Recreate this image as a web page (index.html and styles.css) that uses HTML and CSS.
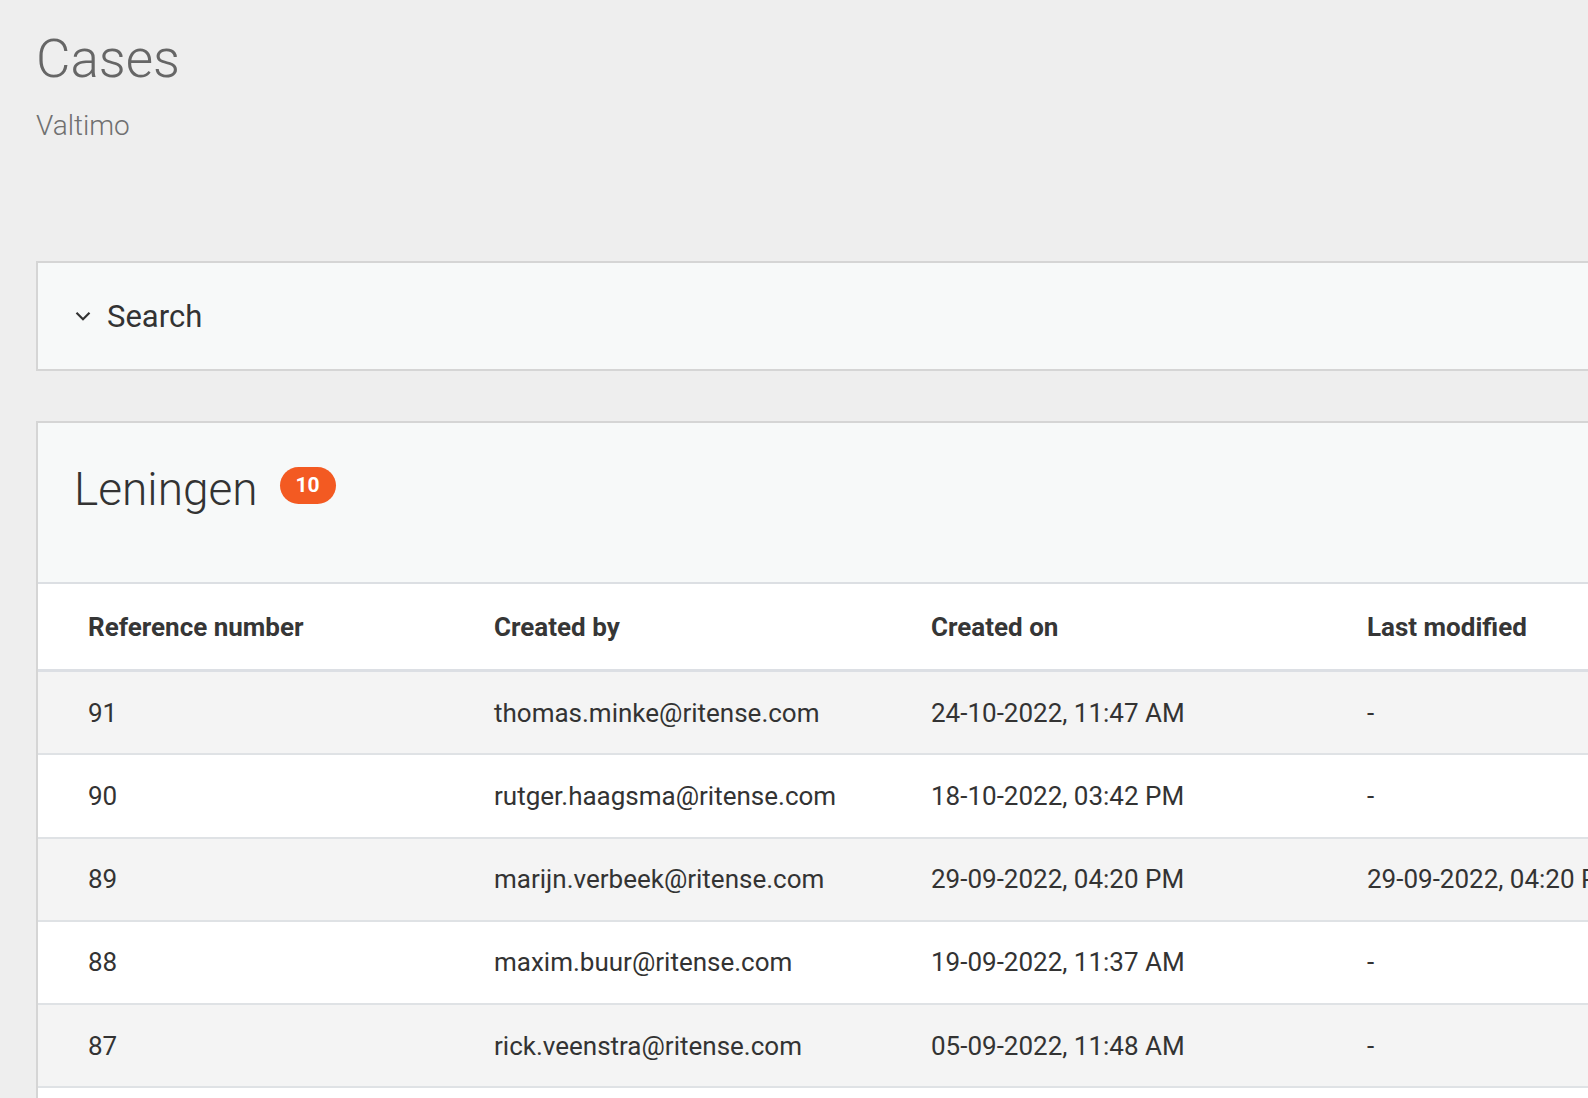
FILE: index.html
```html
<!DOCTYPE html>
<html lang="en">
<head>
<meta charset="utf-8">
<title>Cases - Valtimo</title>
<link rel="stylesheet" href="styles.css">
</head>
<body>
<div class="page">
  <header class="page-header">
    <h1 class="page-title">Cases</h1>
    <div class="page-subtitle">Valtimo</div>
  </header>

  <section class="search-panel">
    <svg class="chevron" width="16" height="10" viewBox="0 0 16 10" aria-hidden="true">
      <polyline points="1.5,1.8 8,8.2 14.5,1.8" fill="none" stroke="#333" stroke-width="2.2" stroke-linecap="butt" stroke-linejoin="miter"/>
    </svg>
    <span class="search-label">Search</span>
  </section>

  <section class="list-card">
    <div class="list-card-header">
      <h2 class="list-title">Leningen</h2>
      <span class="count-badge">10</span>
    </div>
    <table class="cases-table">
      <colgroup>
        <col class="col-ref">
        <col class="col-by">
        <col class="col-on">
        <col class="col-mod">
      </colgroup>
      <thead>
        <tr>
          <th>Reference number</th>
          <th>Created by</th>
          <th>Created on</th>
          <th>Last modified</th>
        </tr>
      </thead>
      <tbody>
        <tr><td>91</td><td>thomas.minke@ritense.com</td><td>24-10-2022, 11:47 AM</td><td>-</td></tr>
        <tr><td>90</td><td>rutger.haagsma@ritense.com</td><td>18-10-2022, 03:42 PM</td><td>-</td></tr>
        <tr><td>89</td><td>marijn.verbeek@ritense.com</td><td>29-09-2022, 04:20 PM</td><td>29-09-2022, 04:20 PM</td></tr>
        <tr><td>88</td><td>maxim.buur@ritense.com</td><td>19-09-2022, 11:37 AM</td><td>-</td></tr>
        <tr><td>87</td><td>rick.veenstra@ritense.com</td><td>05-09-2022, 11:48 AM</td><td>-</td></tr>
        <tr class="row-empty"><td></td><td></td><td></td><td></td></tr>
      </tbody>
    </table>
  </section>
</div>
</body>
</html>
```

FILE: styles.css
```css
html, body {
  margin: 0;
  padding: 0;
  overflow: hidden;
}

body {
  background: #eeeeee;
  font-family: Roboto, "Liberation Sans", Arial, sans-serif;
  color: #333333;
}

.page {
  width: 2100px;
  padding-left: 36px;
  box-sizing: border-box;
}

.page-header {
  padding-top: 28px;
}

.page-title {
  margin: 0;
  font-size: 53px;
  line-height: 62px;
  font-weight: 300;
  color: #666666;
}

.page-subtitle {
  margin-top: 20px;
  font-size: 28px;
  line-height: 32px;
  font-weight: 300;
  color: #707070;
}

.search-panel {
  margin-top: 119px;
  height: 106px;
  border: 2px solid #d5d5d5;
  background: #f7f9f9;
  display: flex;
  align-items: center;
  padding-left: 37px;
}

.chevron {
  display: block;
  flex: none;
}

.search-label {
  margin-left: 16px;
  margin-top: 2px;
  font-size: 31px;
  line-height: 36px;
  font-weight: 400;
  color: #333333;
}

.list-card {
  margin-top: 50px;
  border: 2px solid #d5d5d5;
  border-right: none;
  border-bottom: none;
  background: #ffffff;
}

.list-card-header {
  background: #f7f9f9;
  display: flex;
  align-items: center;
  padding: 39px 0 66px 36px;
  border-bottom: 2px solid #dcdfe3;
}

.list-title {
  margin: 0;
  font-size: 46px;
  line-height: 54px;
  font-weight: 300;
  color: #333333;
}

.count-badge {
  margin-left: 22px;
  margin-bottom: 8px;
  width: 56px;
  height: 37px;
  border-radius: 19px;
  background: #f35a22;
  color: #ffffff;
  font-size: 21px;
  font-weight: 700;
  display: flex;
  align-items: center;
  justify-content: center;
}

.cases-table {
  width: 100%;
  border-collapse: collapse;
  table-layout: fixed;
}

.col-ref { width: 406px; }
.col-by { width: 437px; }
.col-on { width: 436px; }

.cases-table th {
  height: 85px;
  padding: 0 0 0 50px;
  text-align: left;
  vertical-align: middle;
  font-size: 26px;
  font-weight: 700;
  color: #363636;
  background: #ffffff;
  border-bottom: 3px solid #dcdfe4;
  white-space: nowrap;
}

.cases-table td {
  height: 81.25px;
  padding: 0 0 0 50px;
  vertical-align: middle;
  font-size: 26px;
  font-weight: 400;
  color: #333333;
  border-bottom: 2px solid #dfe2e5;
  white-space: nowrap;
}

.cases-table tbody tr:nth-child(odd) td {
  background: #f4f4f4;
}

.cases-table tbody tr:nth-child(even) td {
  background: #ffffff;
}
```
